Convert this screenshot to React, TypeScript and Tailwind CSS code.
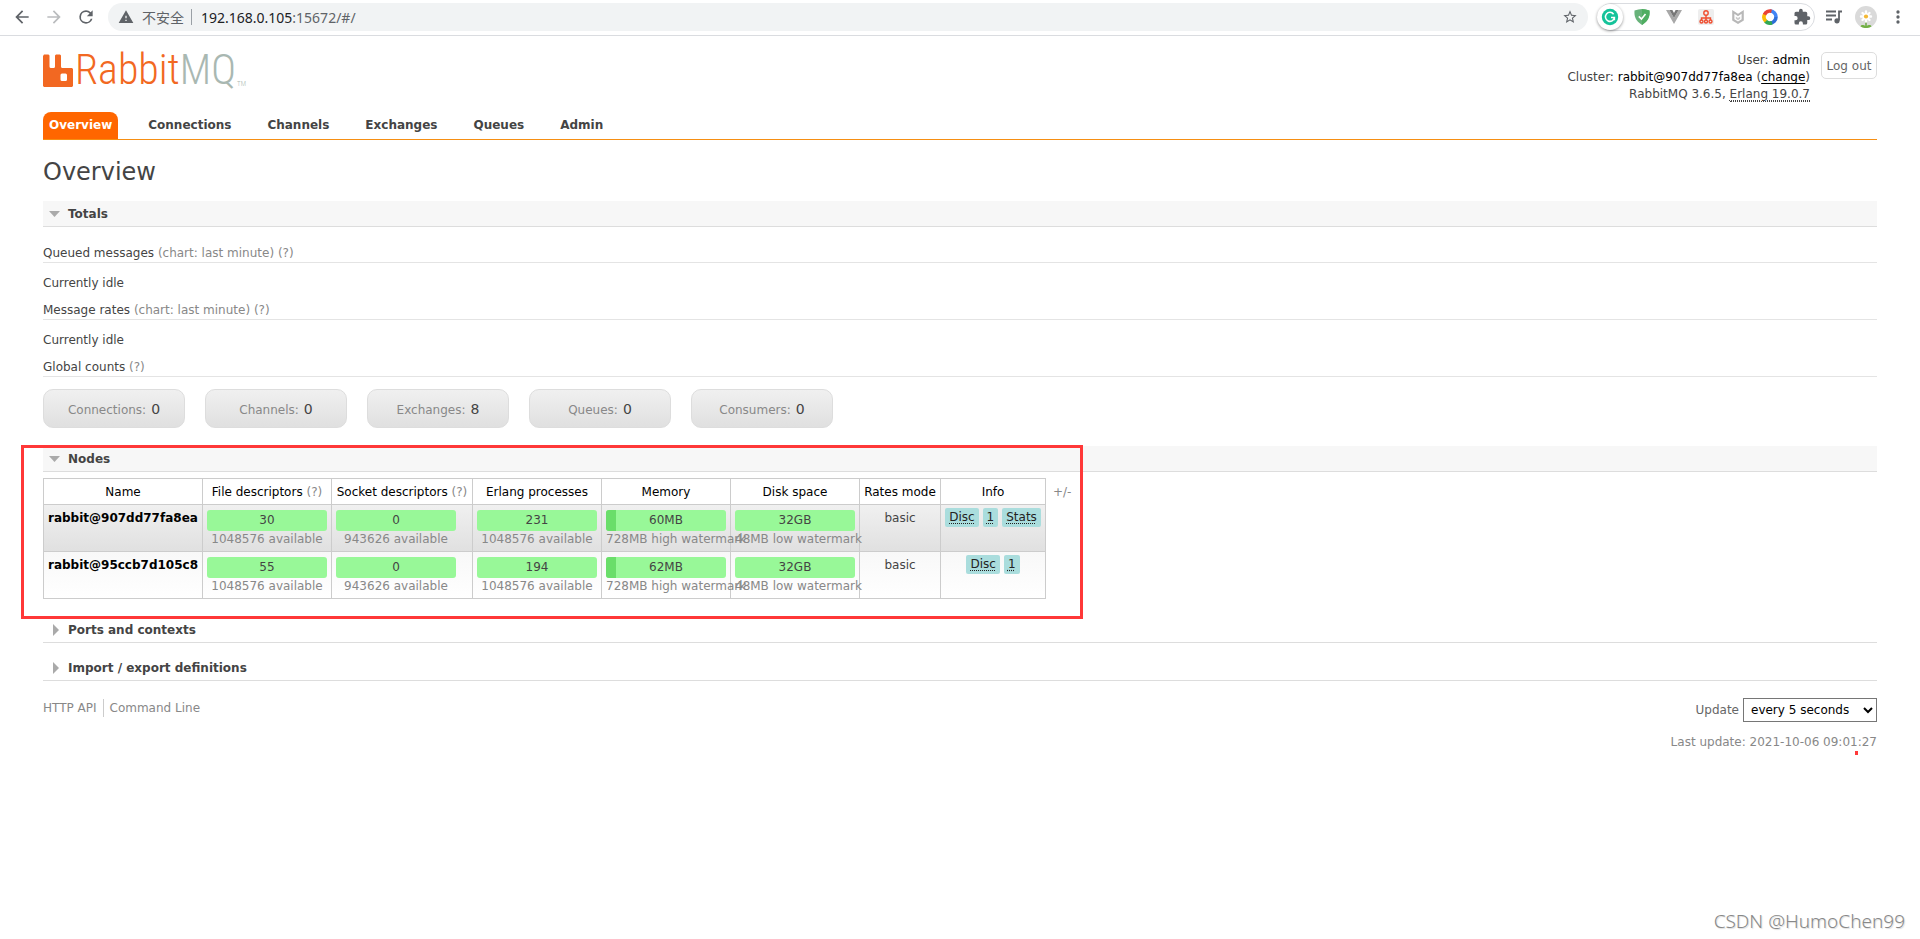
import type { ReactNode } from "react";

const tabs = ["Overview", "Connections", "Channels", "Exchanges", "Queues", "Admin"];

const counts = [
  { label: "Connections", value: 0 },
  { label: "Channels", value: 0 },
  { label: "Exchanges", value: 8 },
  { label: "Queues", value: 0 },
  { label: "Consumers", value: 0 },
];

const nodes = [
  { name: "rabbit@907dd77fa8ea", fd: "30", sockets: "0", procs: "231", memory: "60MB", disk: "32GB", info: ["Disc", "1", "Stats"] },
  { name: "rabbit@95ccb7d105c8", fd: "55", sockets: "0", procs: "194", memory: "62MB", disk: "32GB", info: ["Disc", "1"] },
];

function Toolbar() {
  return (
    <div className="flex h-9 items-center border-b border-[#dadce0] bg-white pb-1 pt-[3px] font-['Noto_Sans','Noto_Sans_CJK_SC',sans-serif]">
      <div className="flex h-7 w-[108px] shrink-0 items-center gap-3 pl-3">
        <button aria-label="Back">
          <svg width="20" height="20" viewBox="0 0 24 24" fill="#5f6368"><path d="M20 11H7.83l5.59-5.59L12 4l-8 8 8 8 1.41-1.41L7.83 13H20z" /></svg>
        </button>
        <button aria-label="Forward">
          <svg width="20" height="20" viewBox="0 0 24 24" fill="#babcbe"><path d="M12 4l-1.41 1.41L16.17 11H4v2h12.17l-5.58 5.59L12 20l8-8z" /></svg>
        </button>
        <button aria-label="Reload">
          <svg width="20" height="20" viewBox="0 0 24 24" fill="#5f6368"><path d="M17.65 6.35A7.96 7.96 0 0 0 12 4a8 8 0 1 0 7.73 10h-2.08A6 6 0 1 1 12 6c1.66 0 3.14.69 4.22 1.78L13 11h7V4z" /></svg>
        </button>
      </div>
      <div className="flex h-7 grow items-center rounded-full bg-[#f1f3f4] px-[10px]">
        <svg width="16" height="16" viewBox="0 0 24 24" fill="#5f6368"><path d="M1 21h22L12 2 1 21zm12-3h-2v-2h2v2zm0-4h-2v-4h2v4z" /></svg>
        <span className="ml-2 text-[14px] text-[#5f6368]">不安全</span>
        <span className="ml-[7px] mr-[9px] h-4 w-px bg-[#9aa0a6]" />
        <span className="text-[14px] text-[#202124]">192.168.0.105<span className="text-[#5f6368]">:15672/#/</span></span>
        <button aria-label="Bookmark" className="ml-auto">
          <svg width="16" height="16" viewBox="0 0 24 24" fill="#5f6368"><path d="M22 9.24l-7.19-.62L12 2 9.19 8.63 2 9.24l5.46 4.73L5.82 21 12 17.27 18.18 21l-1.63-7.03L22 9.24zM12 15.4l-3.76 2.27 1-4.28-3.32-2.88 4.38-.38L12 6.1l1.71 4.04 4.38.38-3.32 2.88 1 4.28L12 15.4z" /></svg>
        </button>
      </div>
      <div className="ml-[9px] flex h-7 w-[218px] shrink-0 items-center gap-4 rounded-full border border-[#dadce0]">
        <span className="-ml-px -mr-[5px] flex size-[26px] shrink-0 items-center justify-center rounded-full bg-white shadow-[0_1px_3px_rgba(0,0,0,0.4)]">
          <svg width="18" height="18" viewBox="0 0 18 18"><circle cx="9" cy="9" r="8.2" fill="#15c39a" /><path d="M12.6 6.2A4.5 4.5 0 1 0 13.4 9.6H10M13.4 9.2v3" fill="none" stroke="#fff" strokeWidth="1.5" /></svg>
        </span>
        <svg width="16" height="16" viewBox="0 0 16 16" className="shrink-0"><path d="M8 0c2.2.2 5 .9 7.5 1.6.4 6-.8 10-7.5 14.400C1.300 11.600.100 7.600.500 1.600 3 .900 5.800.200 8 0z" fill="#67b279" /><path d="M8 0c2.200.200 5 .900 7.500 1.600.400 6-.800 10-7.500 14.400z" fill="#4fae61" /><path d="M4.800 7.400l2.700 2.700 4-5" fill="none" stroke="#fff" strokeWidth="1.600" /></svg>
        <svg width="16" height="16" viewBox="0 0 16 16" className="shrink-0"><path d="M0 1h3.400L8 9l4.600-8H16L8 15z" fill="#a8a8a8" /><path d="M3.400 1h3L8 3.900 9.600 1h3L8 9z" fill="#777" /></svg>
        <svg width="16" height="16" viewBox="0 0 16 16" className="shrink-0"><rect width="16" height="16" rx="2" fill="#eee" /><g fill="none" stroke="#f04e30" strokeWidth="1.400"><circle cx="8" cy="4" r="2.200" /><path d="M8 6.200v5M3.500 11V9h9v2" /><circle cx="3.500" cy="12.500" r="1.500" /><circle cx="8" cy="12.500" r="1.500" /><circle cx="12.500" cy="12.500" r="1.500" /></g></svg>
        <svg width="16" height="16" viewBox="0 0 16 16" className="shrink-0"><path d="M2.200 1L8 4.800 13.800 1v10.500L8 15l-5.800-3.500z" fill="#b8b8b8" /><path d="M4.400 4.800L8 7.200l3.600-2.400v5.500L8 12.500l-3.600-2.200z" fill="#fff" /><path d="M5.800 7.500L8 9l2.200-1.500v2.300L8 11.200 5.800 9.800z" fill="#ccc" /></svg>
        <svg width="16" height="16" viewBox="0 0 16 16" className="shrink-0" fill="none" strokeWidth="3.600"><path d="M8 2A6 6 0 0 1 14 8" stroke="#4285f4" /><path d="M14 8A6 6 0 0 1 8 14" stroke="#2f6fd8" /><path d="M10 13.700A6 6 0 0 1 3.200 11.600" stroke="#34a853" /><path d="M3.800 12.200A6 6 0 0 1 3 4.700" stroke="#fbbc05" /><path d="M2.500 5.600A6 6 0 0 1 9.500 2.200" stroke="#ea4335" /></svg>
        <svg width="18" height="18" viewBox="0 0 24 24" className="-ml-px shrink-0" fill="#5f6368"><path d="M20.500 11H19V7a2 2 0 0 0-2-2h-4V3.500a2.500 2.500 0 0 0-5 0V5H4a2 2 0 0 0-1.990 2v3.800H3.500a2.700 2.700 0 0 1 0 5.400H2V20a2 2 0 0 0 2 2h3.800v-1.500a2.700 2.700 0 0 1 5.400 0V22H17a2 2 0 0 0 2-2v-4h1.500a2.500 2.500 0 0 0 0-5z" /></svg>
      </div>
      <div className="flex w-[105px] shrink-0 items-center pl-[10px]">
        <svg width="18" height="16" viewBox="0 0 18 16" fill="none" stroke="#5f6368" strokeWidth="1.800"><path d="M1 2.500h10M1 6.500h10M1 10.500h6M17 2.500h-3v9" /><circle cx="12" cy="11.800" r="1.700" fill="#5f6368" /></svg>
        <svg width="22" height="22" viewBox="0 0 22 22" className="ml-3"><circle cx="11" cy="11" r="11" fill="#dadada" /><path d="M11 13v8" stroke="#6aa642" strokeWidth="1.500" /><path d="M5.500 20.500c1-2.500 3-1.500 5.500-.500 2.500-1 4.500-2 5.500.500A11 11 0 0 1 5.500 20.500z" fill="#72b043" /><g stroke="#fff" strokeWidth="2.400" strokeLinecap="round"><path d="M11 5.500v10M6 10.500h10M7.500 7l7 7M14.500 7l-7 7" /></g><circle cx="11" cy="10.500" r="2.100" fill="#f4b834" /></svg>
        <button aria-label="Menu" className="ml-[11px]">
          <svg width="20" height="20" viewBox="0 0 24 24" fill="#5f6368"><path d="M12 8a2 2 0 1 0 0-4 2 2 0 0 0 0 4zm0 2a2 2 0 1 0 0 4 2 2 0 0 0 0-4zm0 6a2 2 0 1 0 0 4 2 2 0 0 0 0-4z" /></svg>
        </button>
      </div>
    </div>
  );
}

function SectionTitle({ children, open = false }: { children: ReactNode; open?: boolean }) {
  return (
    <h2 className={open ? "border-b border-[#ddd] bg-[#f7f7f7]" : "border-b border-[#ddd]"}>
      <button className="flex h-[25px] w-full items-center text-left text-[12px] font-bold text-[#444]">
        <span className="flex w-[25px] items-center pl-[6px]">
          {open ? (
            <svg width="11" height="6" viewBox="0 0 11 6" fill="#aaa"><path d="M0 0h11L5.500 6z" /></svg>
          ) : (
            <svg width="11" height="12" viewBox="0 0 11 12" fill="#aaa"><path d="M4 0v12l6-6z" /></svg>
          )}
        </span>
        {children}
      </button>
    </h2>
  );
}

function Topic({ children, hint }: { children: ReactNode; hint?: string }) {
  return (
    <h3 className="border-b border-[#e4e4e4] leading-[18px]">
      {children} <span className="text-[#888]">{hint ? hint + " " : ""}(?)</span>
    </h3>
  );
}

function Bar({ value, note, used = false }: { value: string; note: string; used?: boolean }) {
  return (
    <td className="border border-[#ccc] px-1 pb-[3px] pt-[5px] align-top">
      <div className="flex h-[21px] w-[120px] rounded-[3px] bg-[#98f898]">
        {used && <span className="w-[10px] rounded-l-[3px] bg-[#6ade6a]" />}
        <span className={used ? "grow pr-[10px] leading-[21px]" : "grow leading-[21px]"}>{value}</span>
      </div>
      <div className="w-[120px] whitespace-nowrap leading-[17px] text-[#888]">{note}</div>
    </td>
  );
}

function NodesTable() {
  return (
    <div className="mt-[6px] flex">
      <table className="w-[1002px] table-fixed border-collapse text-center">
        <colgroup>
          <col className="w-[159px]" />
          <col className="w-[129px]" />
          <col className="w-[141px]" />
          <col className="w-[129px]" />
          <col className="w-[129px]" />
          <col className="w-[129px]" />
          <col className="w-[81px]" />
          <col className="w-[105px]" />
        </colgroup>
        <thead>
          <tr className="h-[26px] whitespace-nowrap text-black [&>th]:border [&>th]:border-[#ccc] [&>th]:font-normal">
            <th>Name</th>
            <th>File descriptors <span className="text-[#888]">(?)</span></th>
            <th>Socket descriptors <span className="text-[#888]">(?)</span></th>
            <th>Erlang processes</th>
            <th>Memory</th>
            <th>Disk space</th>
            <th>Rates mode</th>
            <th>Info</th>
          </tr>
        </thead>
        <tbody>
          {nodes.map((n, i) => (
            <tr key={n.name} className={i === 0 ? "bg-linear-to-b from-[#f0f0f0] to-[#e0e0e0]" : "bg-linear-to-b from-[#f8f8f8] to-white"}>
              <td className="whitespace-nowrap border border-[#ccc] pl-1 pt-[5px] text-left align-top font-bold leading-[17px] text-black">
                <a href="#/nodes">{n.name}</a>
              </td>
              <Bar value={n.fd} note="1048576 available" />
              <Bar value={n.sockets} note="943626 available" />
              <Bar value={n.procs} note="1048576 available" />
              <Bar value={n.memory} note="728MB high watermark" used />
              <Bar value={n.disk} note="48MB low watermark" />
              <td className="border border-[#ccc] pt-[5px] align-top leading-[17px]">basic</td>
              <td className="border border-[#ccc] pt-[3px] align-top">
                <div className="flex justify-center gap-1">
                  {n.info.map((t) => (
                    <abbr key={t} className="rounded-[2px] bg-[#aadddd] px-1 leading-[19px] text-[#222] underline decoration-dotted underline-offset-2">{t}</abbr>
                  ))}
                </div>
              </td>
            </tr>
          ))}
        </tbody>
      </table>
      <button className="ml-[7px] h-[28px] self-start text-[#888]">+/-</button>
    </div>
  );
}

export default function App() {
  return (
    <div className="relative min-h-screen bg-white font-['DejaVu_Sans',Verdana,sans-serif] text-[12px] text-[#444]">
      <Toolbar />
      <div className="px-[43px] pt-4">
        <header className="flex h-[60px] items-start">
          <a href="#/" aria-label="RabbitMQ" className="mt-0.5 flex items-start">
            <svg width="30" height="33" viewBox="0 0 30 33" fill="#f26822">
              <path fillRule="evenodd" d="M1 0.500h4.500l1 1v11a1.500 1.500 0 0 0 1.500 1.500h2.500a1.500 1.500 0 0 0 1.500-1.500v-11l1-1h4l1 1v11a1.500 1.500 0 0 0 1.500 1.500H29l1 1v17l-1 1H1l-1-1v-30zM19 19.500a1.500 1.500 0 0 0-1.500 1.500v4.500a1.500 1.500 0 0 0 1.500 1.500H22.500a1.500 1.500 0 0 0 1.500-1.500V21a1.500 1.500 0 0 0-1.500-1.500z" />
            </svg>
            <span className="ml-[2px] font-['Roboto_Condensed',sans-serif] text-[42px] font-light leading-8 text-[#f26822]">
              Rabbit<span className="text-[#a9b8b2]">MQ</span>
            </span>
            <span className="ml-px mt-[26px] font-['Roboto_Condensed',sans-serif] text-[7px] font-light leading-[8px] text-[#a9b8b2]">TM</span>
          </a>
          <div className="ml-auto text-right leading-[17px]">
            <p>User: <span className="text-black">admin</span></p>
            <p>Cluster: <span className="text-black">rabbit@907dd77fa8ea</span> (<a href="#/cluster-name" className="text-black underline underline-offset-2">change</a>)</p>
            <p>RabbitMQ 3.6.5, <abbr className="border-b border-dotted border-[#444] underline decoration-dotted underline-offset-2">Erlang 19.0.7</abbr></p>
          </div>
          <button className="ml-[11px] h-[27px] w-14 whitespace-nowrap rounded-[5px] border border-[#ddd] text-[12px] text-[#666]">Log out</button>
        </header>

        <nav className="flex gap-6 border-b border-[#f68f13]">
          {tabs.map((t, i) => (
            <a key={t} href={"#/" + t.toLowerCase()} className={i === 0 ? "rounded-t-[8px] bg-[#ff6600] px-[6px] font-bold leading-[27px] text-white" : "px-[6px] font-bold leading-[27px]"}>
              {t}
            </a>
          ))}
        </nav>

        <h1 className="mb-[14px] mt-[17px] text-[24px] leading-[30px]">Overview</h1>

        <SectionTitle open>Totals</SectionTitle>
        <div className="mt-[17px]">
          <Topic hint="(chart: last minute)">Queued messages</Topic>
          <p className="mb-[9px] mt-[11px] leading-[18px]">Currently idle</p>
          <Topic hint="(chart: last minute)">Message rates</Topic>
          <p className="mb-[9px] mt-[11px] leading-[18px]">Currently idle</p>
          <Topic>Global counts</Topic>
          <div className="mt-3 flex gap-5">
            {counts.map((c) => (
              <a key={c.label} href={"#/" + c.label.toLowerCase()} className="flex h-[39px] w-[142px] items-center justify-center gap-[5px] rounded-[10px] border border-[#ddd] bg-linear-to-b from-[#f0f0f0] to-[#e0e0e0] pt-0.5 text-[#888]">
                {c.label}: <span className="text-[14px] text-[#444]">{c.value}</span>
              </a>
            ))}
          </div>
        </div>

        <section className="relative my-[18px]">
          <SectionTitle open>Nodes</SectionTitle>
          <NodesTable />
          <div className="pointer-events-none absolute -left-[22px] -top-px h-[174px] w-[1062px] border-[3px] border-[#ff3838]" />
        </section>

        <SectionTitle>Ports and contexts</SectionTitle>
        <div className="h-3" />
        <SectionTitle>Import / export definitions</SectionTitle>

        <footer className="mt-[17px] flex items-start justify-between text-[#888]">
          <div className="flex pt-px leading-[18px]">
            <a href="/api/" className="border-r border-[#ccc] pr-[6px]">HTTP API</a>
            <a href="/cli/" className="pl-[6px]">Command Line</a>
          </div>
          <div className="relative text-right">
            <label className="flex items-center justify-end gap-1 text-[#666]">
              Update
              <select className="h-6 w-[134px] border border-[#767676] bg-white px-[3px] text-[12px] text-black">
                <option>every 5 seconds</option>
              </select>
            </label>
            <p className="mt-[11px] leading-[18px]">Last update: 2021-10-06 09:01:27</p>
            <span className="absolute right-[19px] top-[53px] h-1 w-[3px] bg-[#ff3838]" />
          </div>
        </footer>
      </div>
      <p className="absolute bottom-1 right-[15px] font-['Noto_Sans',sans-serif] text-[19px] font-light leading-7 text-[#888] [text-shadow:1px_1px_1px_#ddd]">CSDN @HumoChen99</p>
    </div>
  );
}
